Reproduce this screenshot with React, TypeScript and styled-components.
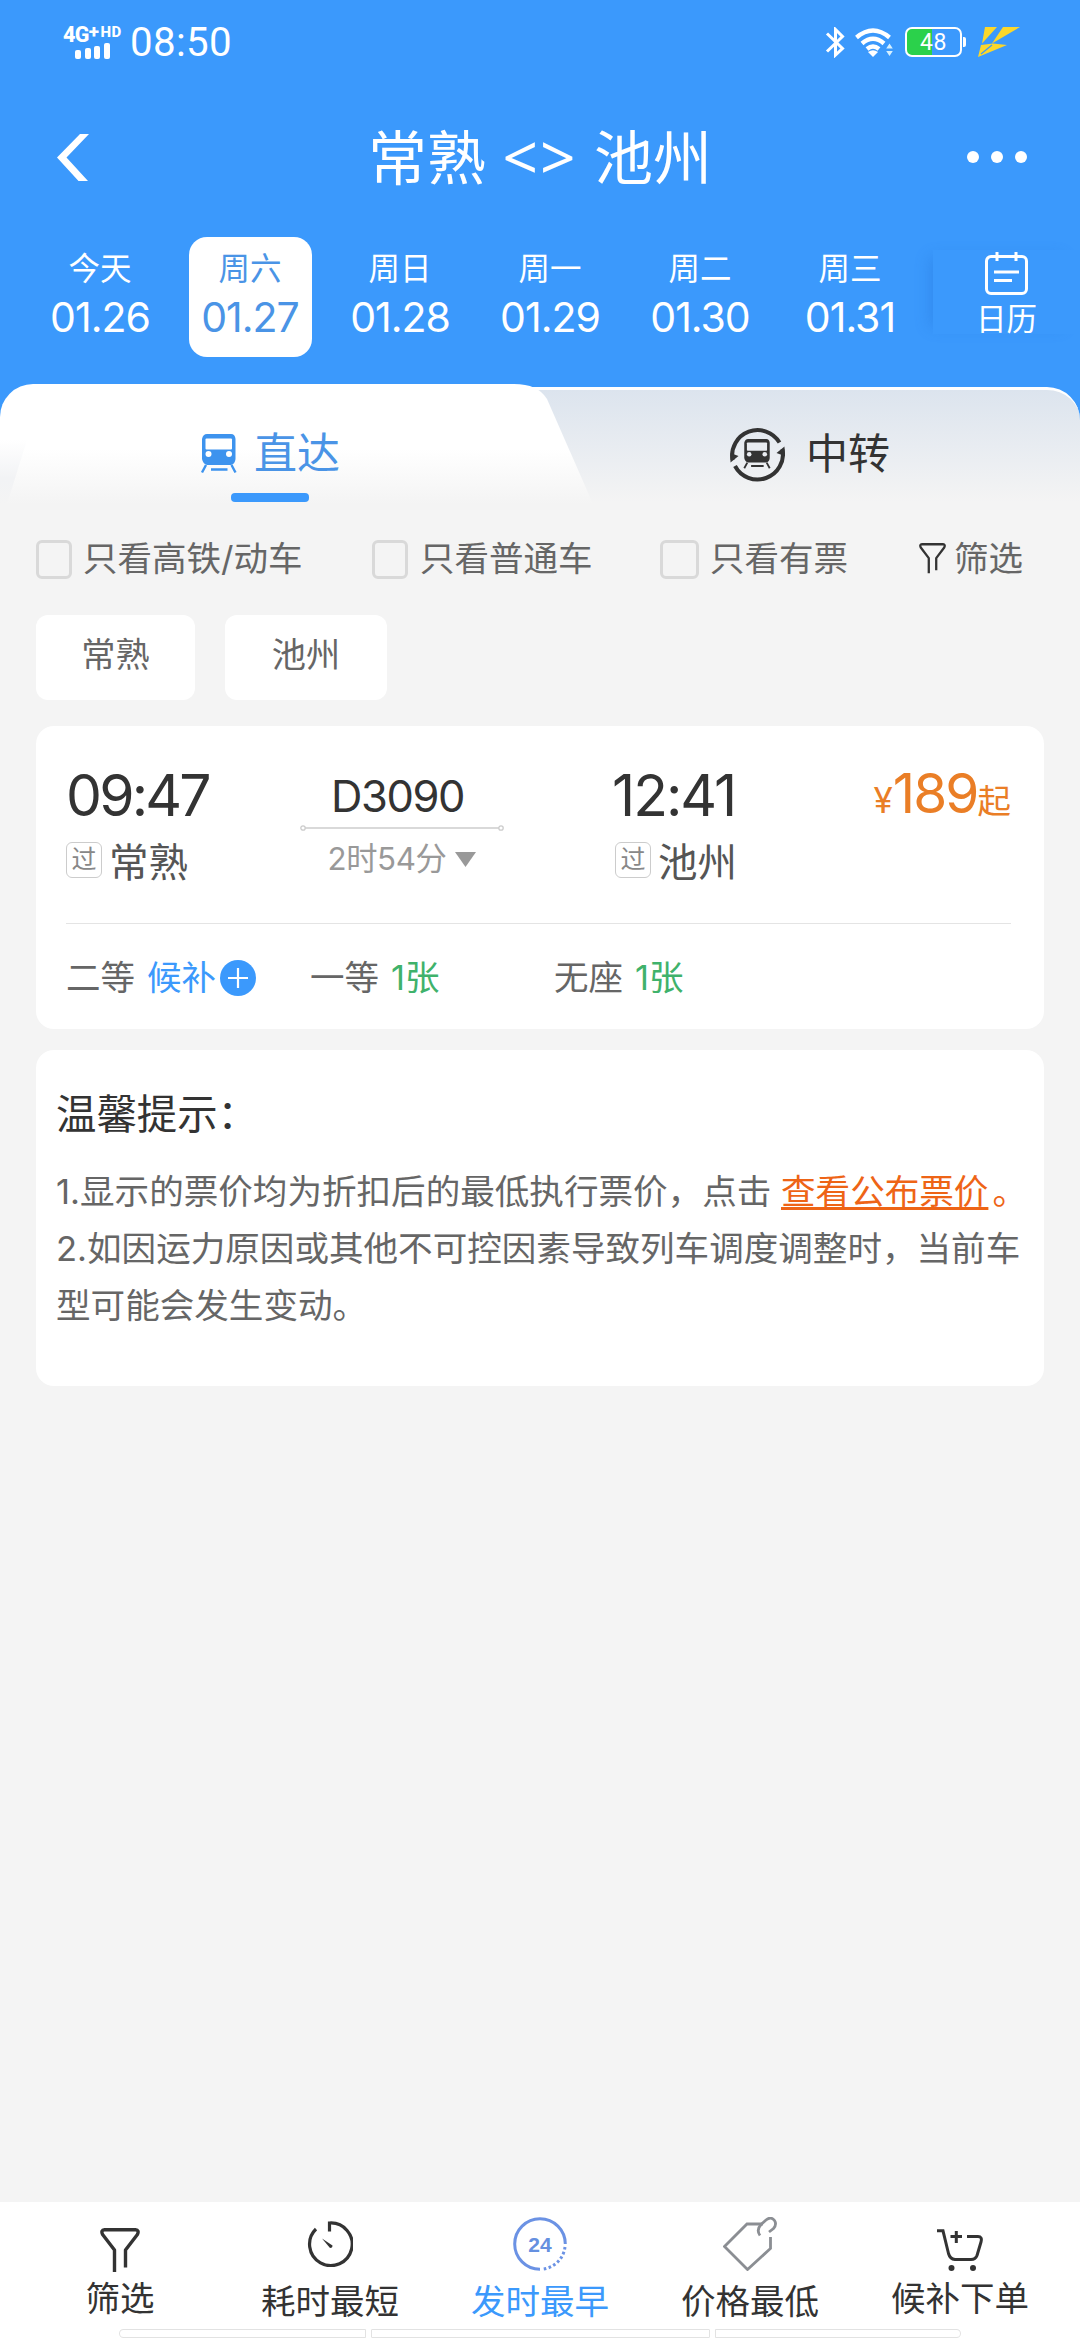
import React from "react";
import styled, { createGlobalStyle } from "styled-components";

const BLUE = "#3b99fc";

const GlobalStyle = createGlobalStyle`
  * { box-sizing: border-box; }
  body {
    margin: 0;
    background: #f4f4f4;
    font-family: Inter, "Noto Sans CJK SC", sans-serif;
    font-weight: 400;
  }
`;

const Page = styled.div`
  width: 1080px;
  height: 2340px;
  display: flex;
  flex-direction: column;
  overflow: hidden;
  background: #f4f4f4;
`;

/* ---------- header ---------- */
const Header = styled.header`
  height: 384px;
  flex: none;
  background: ${BLUE};
  color: #fff;
`;

const StatusBar = styled.div`
  height: 84px;
  padding: 0 60px 0 63px;
  display: flex;
  justify-content: space-between;
  align-items: center;
`;

const StatusGroup = styled.div`
  display: flex;
  align-items: center;
`;

const Signal = styled.div`
  width: 59px;
  height: 33px;
  margin-right: 8px;
  display: flex;
  flex-direction: column;
`;

const NetLabel = styled.div`
  display: flex;
  align-items: flex-start;
  height: 17px;
  font-family: Roboto, sans-serif;
  font-weight: 800;
  font-size: 21.5px;
  line-height: 17px;
  letter-spacing: -0.6px;
`;

const PlusMark = styled.span`
  font-size: 19px;
  line-height: 11px;
`;

const HdLabel = styled.span`
  margin-left: 2px;
  font-size: 15px;
  line-height: 12px;
  letter-spacing: 0.4px;
`;

const Bars = styled.div`
  display: flex;
  align-items: flex-end;
  gap: 3.4px;
  padding-left: 12px;
  height: 16px;
`;

const Bar = styled.i<{ $h: number }>`
  width: 6.2px;
  height: ${(p) => p.$h}px;
  border-radius: 2px;
  background: #fff;
`;

const Clock = styled.span`
  padding-top: 1px;
  font-family: Roboto, sans-serif;
  font-size: 40.3px;
  line-height: 44px;
  letter-spacing: 0.3px;
`;

const BluetoothSlot = styled.span`
  display: flex;
  margin-right: 10px;
`;

const WifiSlot = styled.span`
  display: flex;
  margin-right: 12px;
`;

const Battery = styled.span`
  width: 57px;
  height: 30px;
  border: 2.5px solid #fff;
  border-radius: 7px;
  background: linear-gradient(90deg, #2bd14b 0 25px, transparent 25px);
  font-family: Roboto, sans-serif;
  font-size: 23px;
  line-height: 27px;
  letter-spacing: 0.6px;
  text-align: center;
`;

const BatteryNub = styled.span`
  width: 3px;
  height: 10px;
  margin: 0 12px 0 1px;
  border-radius: 0 2px 2px 0;
  background: #fff;
`;

const NavBar = styled.div`
  height: 146px;
  padding: 0 53px 0 57px;
  display: grid;
  grid-template-columns: 100px 1fr 100px;
  align-items: center;
`;

const NavTitle = styled.h1`
  margin: 0;
  padding: 4px 4px 0 0;
  font-size: 59px;
  line-height: 80px;
  font-weight: 400;
  text-align: center;
  white-space: pre;
`;

const Angle = styled.span`
  font-family: "Noto Sans", sans-serif;
  font-size: 62px;
  letter-spacing: 2px;
  line-height: 1;
`;

const Dots = styled.div`
  display: flex;
  gap: 12px;
  justify-content: flex-end;
`;

const Dot = styled.i`
  width: 12px;
  height: 12px;
  border-radius: 50%;
  background: #fff;
`;

const DateStrip = styled.div`
  display: flex;
  padding: 7px 0 0 25px;
`;

const DateCell = styled.div<{ $active?: boolean }>`
  width: 123px;
  height: 120px;
  margin: 0 13.5px;
  padding-top: 12px;
  border-radius: 18px;
  text-align: center;
  white-space: nowrap;
  background: ${(p) => (p.$active ? "#fff" : "transparent")};
  color: ${(p) => (p.$active ? "#4a94e6" : "#fff")};
`;

const DayName = styled.div`
  font-size: 31.5px;
  line-height: 40px;
`;

const DayNumber = styled.div`
  font-size: 41px;
  line-height: 57px;
  letter-spacing: -1px;
`;

const Calendar = styled.div`
  width: 147px;
  height: 84px;
  margin: 13px 0 0 8px;
  padding: 2px 0 0 0;
  display: flex;
  flex-direction: column;
  align-items: center;
  box-shadow: -10px 0 14px -7px rgba(30, 110, 210, 0.32);
  font-size: 30.5px;
  line-height: 40px;
  gap: 4px;

  & > svg {
    flex: none;
  }
`;

/* ---------- direct / transfer tabs ---------- */
const TabBar = styled.nav`
  height: 120px;
  flex: none;
  display: flex;
  background: linear-gradient(${BLUE} 0 50px, #f4f4f4 50px);
`;

const DirectTab = styled.div`
  position: relative;
  z-index: 1;
  width: 593px;
  height: 120px;
  display: flex;
  padding: 48px 0 0 201px;
  gap: 17px;
  color: #4a94e6;
  font-size: 43px;
  line-height: 43px;
  background: linear-gradient(#fff 0 65px, #f4f4f4 120px);
  clip-path: path("M0 33 A33 33 0 0 1 33 0 H514 Q538 0 547 15 L593 120 H0 Z");

  &::before {
    content: "";
    position: absolute;
    left: 0;
    bottom: 0;
    width: 27px;
    height: 64px;
    background: linear-gradient(#fff, #f2f3f5 60%, #f4f4f4);
    clip-path: polygon(0 0, 100% 0, 7px 100%, 0 100%);
  }

  &::after {
    content: "";
    position: absolute;
    left: 231px;
    top: 109px;
    width: 78px;
    height: 9px;
    border-radius: 4px;
    background: ${BLUE};
  }
`;

const TransferTab = styled.div`
  width: 587px;
  margin: 3px 0 0 -100px;
  padding: 37px 0 0 237px;
  display: flex;
  gap: 21px;
  color: #333;
  font-size: 42px;
  line-height: 53px;
  border-top: 3px solid #fff;
  border-radius: 0 33px 0 0;
  background: linear-gradient(#dce4ee, #f4f4f4 112px);
`;

/* ---------- filters ---------- */
const FilterRow = styled.div`
  flex: none;
  height: 39px;
  margin: 36px 0 0 36px;
  display: grid;
  grid-template-columns: 336px 288px 259px auto;
`;

const FilterItem = styled.label<{ $gap: number }>`
  display: flex;
  gap: ${(p) => p.$gap}px;
  color: #666;
  font-size: 34.5px;
  line-height: 37px;
  white-space: nowrap;
`;

const Box = styled.span<{ $w: number }>`
  width: ${(p) => p.$w}px;
  height: 39px;
  border: 3px solid #d9d9d9;
  border-radius: 6px;
`;

const FunnelSlot = styled.span`
  display: flex;
  height: 31px;
  margin-top: 3px;
`;

const Chips = styled.div`
  flex: none;
  display: flex;
  gap: 30px;
  margin: 36px 0 0 36px;
`;

const Chip = styled.div<{ $w: number }>`
  width: ${(p) => p.$w}px;
  height: 85px;
  border-radius: 12px;
  background: #fff;
  color: #666;
  font-size: 34.2px;
  line-height: 79px;
  text-align: center;
`;

/* ---------- train card ---------- */
const Card = styled.section<{ $mt: number; $h: number }>`
  flex: none;
  width: 1008px;
  height: ${(p) => p.$h}px;
  margin: ${(p) => p.$mt}px 36px 0;
  border-radius: 18px;
  background: #fff;
`;

const Trip = styled.div`
  margin: 0 33px 0 30px;
  height: 198px;
  padding-top: 39px;
  display: grid;
  grid-template-columns: 234px 204px 1fr auto;
  border-bottom: 1.5px solid #e4e4e4;
`;

const Stop = styled.div<{ $left?: number }>`
  margin-left: ${(p) => p.$left || 0}px;
`;

const StopTime = styled.div<{ $ls: number; $ml: number }>`
  margin-left: ${(p) => p.$ml}px;
  font-size: 57px;
  line-height: 61px;
  height: 60px;
  letter-spacing: ${(p) => p.$ls}px;
  color: #333;
`;

const StopName = styled.div`
  display: flex;
  align-items: center;
  margin-top: 18px;
  gap: 7px;
  font-size: 39.5px;
  line-height: 40px;
  color: #555;
`;

const Pass = styled.span`
  width: 36px;
  height: 36px;
  margin-top: -6px;
  border: 1.5px solid #ccc;
  border-radius: 6px;
  font-size: 25px;
  line-height: 33px;
  text-align: center;
  color: #888;
`;

const Middle = styled.div`
  display: flex;
  flex-direction: column;
  align-items: center;
`;

const TrainNo = styled.div`
  height: 60px;
  margin-right: 9px;
  font-size: 43.5px;
  line-height: 62px;
  letter-spacing: -1.4px;
  color: #333;
`;

const Duration = styled.div`
  display: flex;
  align-items: center;
  gap: 9px;
  margin-top: 8px;
  font-size: 31.3px;
  line-height: 41px;
  letter-spacing: -0.4px;
  color: #999;
`;

const Price = styled.div`
  display: flex;
  align-items: baseline;
  height: 60px;
  color: #ea7e26;
  font-size: 33.5px;
  line-height: 57px;
`;

const Yen = styled.span`
  font-size: 35px;
`;

const Amount = styled.span`
  font-size: 55px;
  letter-spacing: -1.9px;
`;

const Seats = styled.div`
  margin-left: 30px;
  height: 108px;
  display: grid;
  grid-template-columns: 244px 244px auto;
  align-items: center;
`;

const Seat = styled.div`
  display: flex;
  align-items: center;
  color: #666;
  font-size: 34.5px;
  line-height: 42px;

  & > svg {
    margin-bottom: 1px;
  }
`;

const SeatState = styled.span<{ $color: string }>`
  margin: 0 4px 0 12px;
  color: ${(p) => p.$color};
`;

/* ---------- tips ---------- */
const TipsTitle = styled.h2`
  margin: 0;
  padding: 40px 0 0 20px;
  font-size: 40.4px;
  line-height: 50px;
  font-weight: 400;
  color: #333;
`;

const TipsBody = styled.div`
  padding: 23px 0 0 20px;
  font-size: 34.57px;
  line-height: 57.2px;
  color: #666;
  white-space: pre;
`;

const TipLine = styled.div``;

const FareLink = styled.span`
  color: #ee6416;
  text-decoration: underline;
  text-decoration-thickness: 3px;
  text-underline-offset: 3px;
  text-decoration-skip-ink: none;
`;

const Stopmark = styled.span`
  margin-left: 4px;
  color: #ee6416;
`;

/* ---------- bottom bar ---------- */
const BottomBar = styled.footer`
  margin-top: auto;
  height: 138px;
  flex: none;
  background: #fff;
`;

const BottomTabs = styled.div`
  display: flex;
  padding-left: 15px;
  height: 127px;
`;

const BottomTab = styled.div<{ $active?: boolean; $top: number }>`
  width: 210px;
  padding-top: ${(p) => p.$top}px;
  display: flex;
  flex-direction: column;
  align-items: center;
  color: ${(p) => (p.$active ? BLUE : "#333")};
  font-size: 34.5px;
  line-height: 41px;
`;

const BottomIcon = styled.span<{ $h: number; $gap: number }>`
  height: ${(p) => p.$h}px;
  margin-bottom: ${(p) => p.$gap}px;
  display: flex;
`;

const Handles = styled.div`
  display: flex;
  gap: 5px;
  padding-left: 119px;
`;

const Handle = styled.i<{ $w: number; $r: string }>`
  width: ${(p) => p.$w}px;
  height: 9px;
  border: 1.5px solid #e2e2e2;
  border-radius: ${(p) => p.$r};
`;

/* ---------- drawings ---------- */
const TrainShape = ({ color, hole }: { color: string; hole: string }) => (
  <g>
    <path d="M6 0H30Q34 0 34.5 5V25Q34 30 30 31H6Q2 30 1 25V5Q2 0 6 0Z" fill={color} />
    <rect x="4.5" y="4.5" width="26.5" height="11" rx="1" fill={hole} />
    <circle cx="7.5" cy="20" r="3" fill={hole} />
    <circle cx="28" cy="20" r="3" fill={hole} />
    <path d="M5 31L1 38.5M30.5 31L34.5 38.5M10 35.5H26.5" stroke={color} strokeWidth="2.4" fill="none" />
  </g>
);

const TransferIcon = () => (
  <svg width="55" height="55" viewBox="0 0 55 55">
    <g fill="none" stroke="#333" strokeWidth="4">
      <path d="M2.5 33A25.5 25.5 0 0 1 49.5 15.5" />
      <path d="M52.5 22A25.5 25.5 0 0 1 5 39" />
    </g>
    <path d="M0.5 35.5L8.5 29L0.5 26Z M54.5 19.5L46.5 26L54.5 29Z" fill="#333" />
    <g transform="translate(13.5 12) scale(0.76)">
      <TrainShape color="#333" hole="#e9ecf1" />
    </g>
  </svg>
);

const Funnel = ({ w, h, sw }: { w: number; h: number; sw: number }) => (
  <svg width={w} height={h} viewBox="0 0 40 45" preserveAspectRatio="none">
    <path
      d="M14.5 44V22L2.6 6.5Q0.5 2 4.5 1.8H35.5Q39.5 2 37.4 6.5L25.5 22V39.5"
      fill="none"
      stroke="#333"
      strokeWidth={sw}
      strokeLinejoin="round"
    />
  </svg>
);

const dates = [
  ["今天", "01.26"],
  ["周六", "01.27"],
  ["周日", "01.28"],
  ["周一", "01.29"],
  ["周二", "01.30"],
  ["周三", "01.31"],
];

export default function App() {
  return (
    <>
      <GlobalStyle />
      <Page>
        <Header>
          <StatusBar>
            <StatusGroup>
              <Signal>
                <NetLabel>
                  4G<PlusMark>+</PlusMark>
                  <HdLabel>HD</HdLabel>
                </NetLabel>
                <Bars>
                  {[9, 11, 13, 16].map((h) => (
                    <Bar key={h} $h={h} />
                  ))}
                </Bars>
              </Signal>
              <Clock>08:50</Clock>
            </StatusGroup>
            <StatusGroup>
              <BluetoothSlot>
                <svg width="20" height="31" viewBox="0 0 20 31">
                  <path d="M2 6.5L17.5 21.5L10.5 28V2.5L17.5 9.5L2 24.5" fill="none" stroke="#fff" strokeWidth="3" />
                </svg>
              </BluetoothSlot>
              <WifiSlot>
                <svg width="38" height="29" viewBox="0 0 38 29">
                  <g fill="none" stroke="#fff" strokeWidth="4.4">
                    <path d="M1.5 9.5Q18 -4.5 34.5 9.5" />
                    <path d="M7 15.5Q18 6 29 15.5" />
                    <path d="M12 21Q18 16 24 21" />
                  </g>
                  <path d="M13 24Q18 20.5 23 24L18 29Z" fill="#fff" />
                  <path d="M34.5 15.5L37.8 20.5H31.2Z M34.5 28L37.8 23H31.2Z" fill="#d6f0ff" />
                </svg>
              </WifiSlot>
              <Battery>48</Battery>
              <BatteryNub />
              <svg width="42" height="30" viewBox="0 0 42 30">
                <path d="M7 0H19L4 16.5Z M25 0H42L14 16.5Z M3 18L15 16.5L29 18L0 30Z" fill="#fbd72b" />
                <path d="M3 27L14 18" stroke={BLUE} strokeWidth="1.2" />
              </svg>
            </StatusGroup>
          </StatusBar>
          <NavBar>
            <svg width="32" height="47" viewBox="0 0 32 47">
              <path d="M23 0H32L9.5 23.5L31 47H21.5L0 23.5Z" fill="#fff" />
            </svg>
            <NavTitle>
              常熟 <Angle>{"<>"}</Angle> 池州
            </NavTitle>
            <Dots>
              <Dot />
              <Dot />
              <Dot />
            </Dots>
          </NavBar>
          <DateStrip>
            {dates.map(([name, num], i) => (
              <DateCell key={num} $active={i === 1}>
                <DayName>{name}</DayName>
                <DayNumber>{num}</DayNumber>
              </DateCell>
            ))}
            <Calendar>
              <svg width="43" height="43" viewBox="0 0 43 43">
                <g fill="none" stroke="#fff" strokeWidth="3">
                  <rect x="1.5" y="4.5" width="40" height="37" rx="4.5" />
                  <path d="M12 0V9M31 0V9M9 20H34M9 28.5H27" />
                </g>
              </svg>
              日历
            </Calendar>
          </DateStrip>
        </Header>

        <TabBar>
          <DirectTab>
            <svg width="36" height="40" viewBox="0 -2 36 40" overflow="visible">
              <TrainShape color="#3d93ee" hole="#fff" />
            </svg>
            直达
          </DirectTab>
          <TransferTab>
            <TransferIcon />
            中转
          </TransferTab>
        </TabBar>

        <FilterRow>
          <FilterItem $gap={11}>
            <Box $w={36} />
            只看高铁/动车
          </FilterItem>
          <FilterItem $gap={12}>
            <Box $w={36} />
            只看普通车
          </FilterItem>
          <FilterItem $gap={11}>
            <Box $w={39} />
            只看有票
          </FilterItem>
          <FilterItem $gap={8}>
            <FunnelSlot>
              <Funnel w={27} h={31} sw={3.4} />
            </FunnelSlot>
            筛选
          </FilterItem>
        </FilterRow>

        <Chips>
          <Chip $w={159}>常熟</Chip>
          <Chip $w={162}>池州</Chip>
        </Chips>

        <Card $mt={26} $h={303}>
          <Trip>
            <Stop>
              <StopTime $ls={-2.8} $ml={0}>09:47</StopTime>
              <StopName>
                <Pass>过</Pass>常熟
              </StopName>
            </Stop>
            <Middle>
              <TrainNo>D3090</TrainNo>
              <svg width="204" height="6" viewBox="0 0 204 6">
                <g fill="none" stroke="#ccc" strokeWidth="1.3">
                  <circle cx="3" cy="3" r="2.2" />
                  <circle cx="201" cy="3" r="2.2" />
                  <path d="M5.2 3H198.8" />
                </g>
              </svg>
              <Duration>
                2时54分
                <svg width="21" height="15" viewBox="0 0 21 15">
                  <path d="M0 0H21L10.5 15Z" fill="#999" />
                </svg>
              </Duration>
            </Middle>
            <Stop $left={111}>
              <StopTime $ls={-2} $ml={-3}>12:41</StopTime>
              <StopName>
                <Pass>过</Pass>池州
              </StopName>
            </Stop>
            <Price>
              <Yen>¥</Yen>
              <Amount>189</Amount>起
            </Price>
          </Trip>
          <Seats>
            <Seat>
              二等<SeatState $color={BLUE}>候补</SeatState>
              <svg width="36" height="36" viewBox="0 0 36 36">
                <circle cx="18" cy="18" r="18" fill={BLUE} />
                <path d="M8 18H28M18 8V28" stroke="#fff" strokeWidth="2.2" />
              </svg>
            </Seat>
            <Seat>
              一等<SeatState $color="#3fb26b">1张</SeatState>
            </Seat>
            <Seat>
              无座<SeatState $color="#3fb26b">1张</SeatState>
            </Seat>
          </Seats>
        </Card>

        <Card $mt={21} $h={336}>
          <TipsTitle>温馨提示：</TipsTitle>
          <TipsBody>
            <TipLine>
              1.显示的票价均为折扣后的最低执行票价，点击 <FareLink>查看公布票价</FareLink>
              <Stopmark>。</Stopmark>
            </TipLine>
            <TipLine>2.如因运力原因或其他不可控因素导致列车调度调整时，当前车</TipLine>
            <TipLine>型可能会发生变动。</TipLine>
          </TipsBody>
        </Card>

        <BottomBar>
          <BottomTabs>
            <BottomTab $top={26}>
              <BottomIcon $h={45} $gap={5}>
                <Funnel w={40} h={45} sw={3.4} />
              </BottomIcon>
              筛选
            </BottomTab>
            <BottomTab $top={19}>
              <BottomIcon $h={46} $gap={14}>
                <svg width="46" height="46" viewBox="0 0 46 46">
                  <path d="M22.5 10.5V2A21.3 21.3 0 1 1 9 8" fill="none" stroke="#333" strokeWidth="3.2" />
                  <path d="M15 17.5L25.5 24.5Q25.5 27 23 27Z" fill="#333" />
                </svg>
              </BottomIcon>
              耗时最短
            </BottomTab>
            <BottomTab $top={15} $active>
              <BottomIcon $h={54} $gap={10}>
                <svg width="54" height="54" viewBox="0 0 54 54">
                  <path d="M27 52.3A25.3 25.3 0 1 1 52.3 27" fill="none" stroke="#6b92e4" strokeWidth="3" />
                  <path d="M52 30A25.3 25.3 0 0 1 29 52.2" fill="none" stroke="#6b92e4" strokeWidth="3" strokeDasharray="2.6 2.4" />
                  <text x="27" y="34.5" fontSize="21" fontWeight="700" fontFamily="Liberation Sans" textAnchor="middle" fill="#6590e0">24</text>
                </svg>
              </BottomIcon>
              发时最早
            </BottomTab>
            <BottomTab $top={15}>
              <BottomIcon $h={54} $gap={10}>
                <svg width="54" height="54" viewBox="0 0 54 54">
                  <g fill="none" stroke="#8b8e93" strokeWidth="2.8">
                    <path d="M40 7H24L1.5 29.5L24.5 52.5L47.5 31.5V20" />
                    <path d="M37 18.5Q33 13 38 7.5L43 3Q48 -1 51.5 3.5Q54 7.5 50.5 11.5L46 15" />
                  </g>
                </svg>
              </BottomIcon>
              价格最低
            </BottomTab>
            <BottomTab $top={26}>
              <BottomIcon $h={45} $gap={5}>
                <svg width="46" height="45" viewBox="0 0 46 45">
                  <g fill="none" stroke="#333" strokeWidth="3">
                    <path d="M0 2.8H6L11.5 25.5Q13 31 18 31.5H34Q38.5 31.5 40 27.5L44 14Q45.5 8.5 41 8.5H30" />
                    <path d="M13.5 8.5H25M19.3 3V15" />
                  </g>
                  <circle cx="14.5" cy="40" r="3" fill="#333" />
                  <circle cx="36" cy="40" r="3" fill="#333" />
                </svg>
              </BottomIcon>
              候补下单
            </BottomTab>
          </BottomTabs>
          <Handles>
            <Handle $w={247} $r="5px 1px 1px 5px" />
            <Handle $w={339} $r="1px" />
            <Handle $w={246} $r="1px 5px 5px 1px" />
          </Handles>
        </BottomBar>
      </Page>
    </>
  );
}
